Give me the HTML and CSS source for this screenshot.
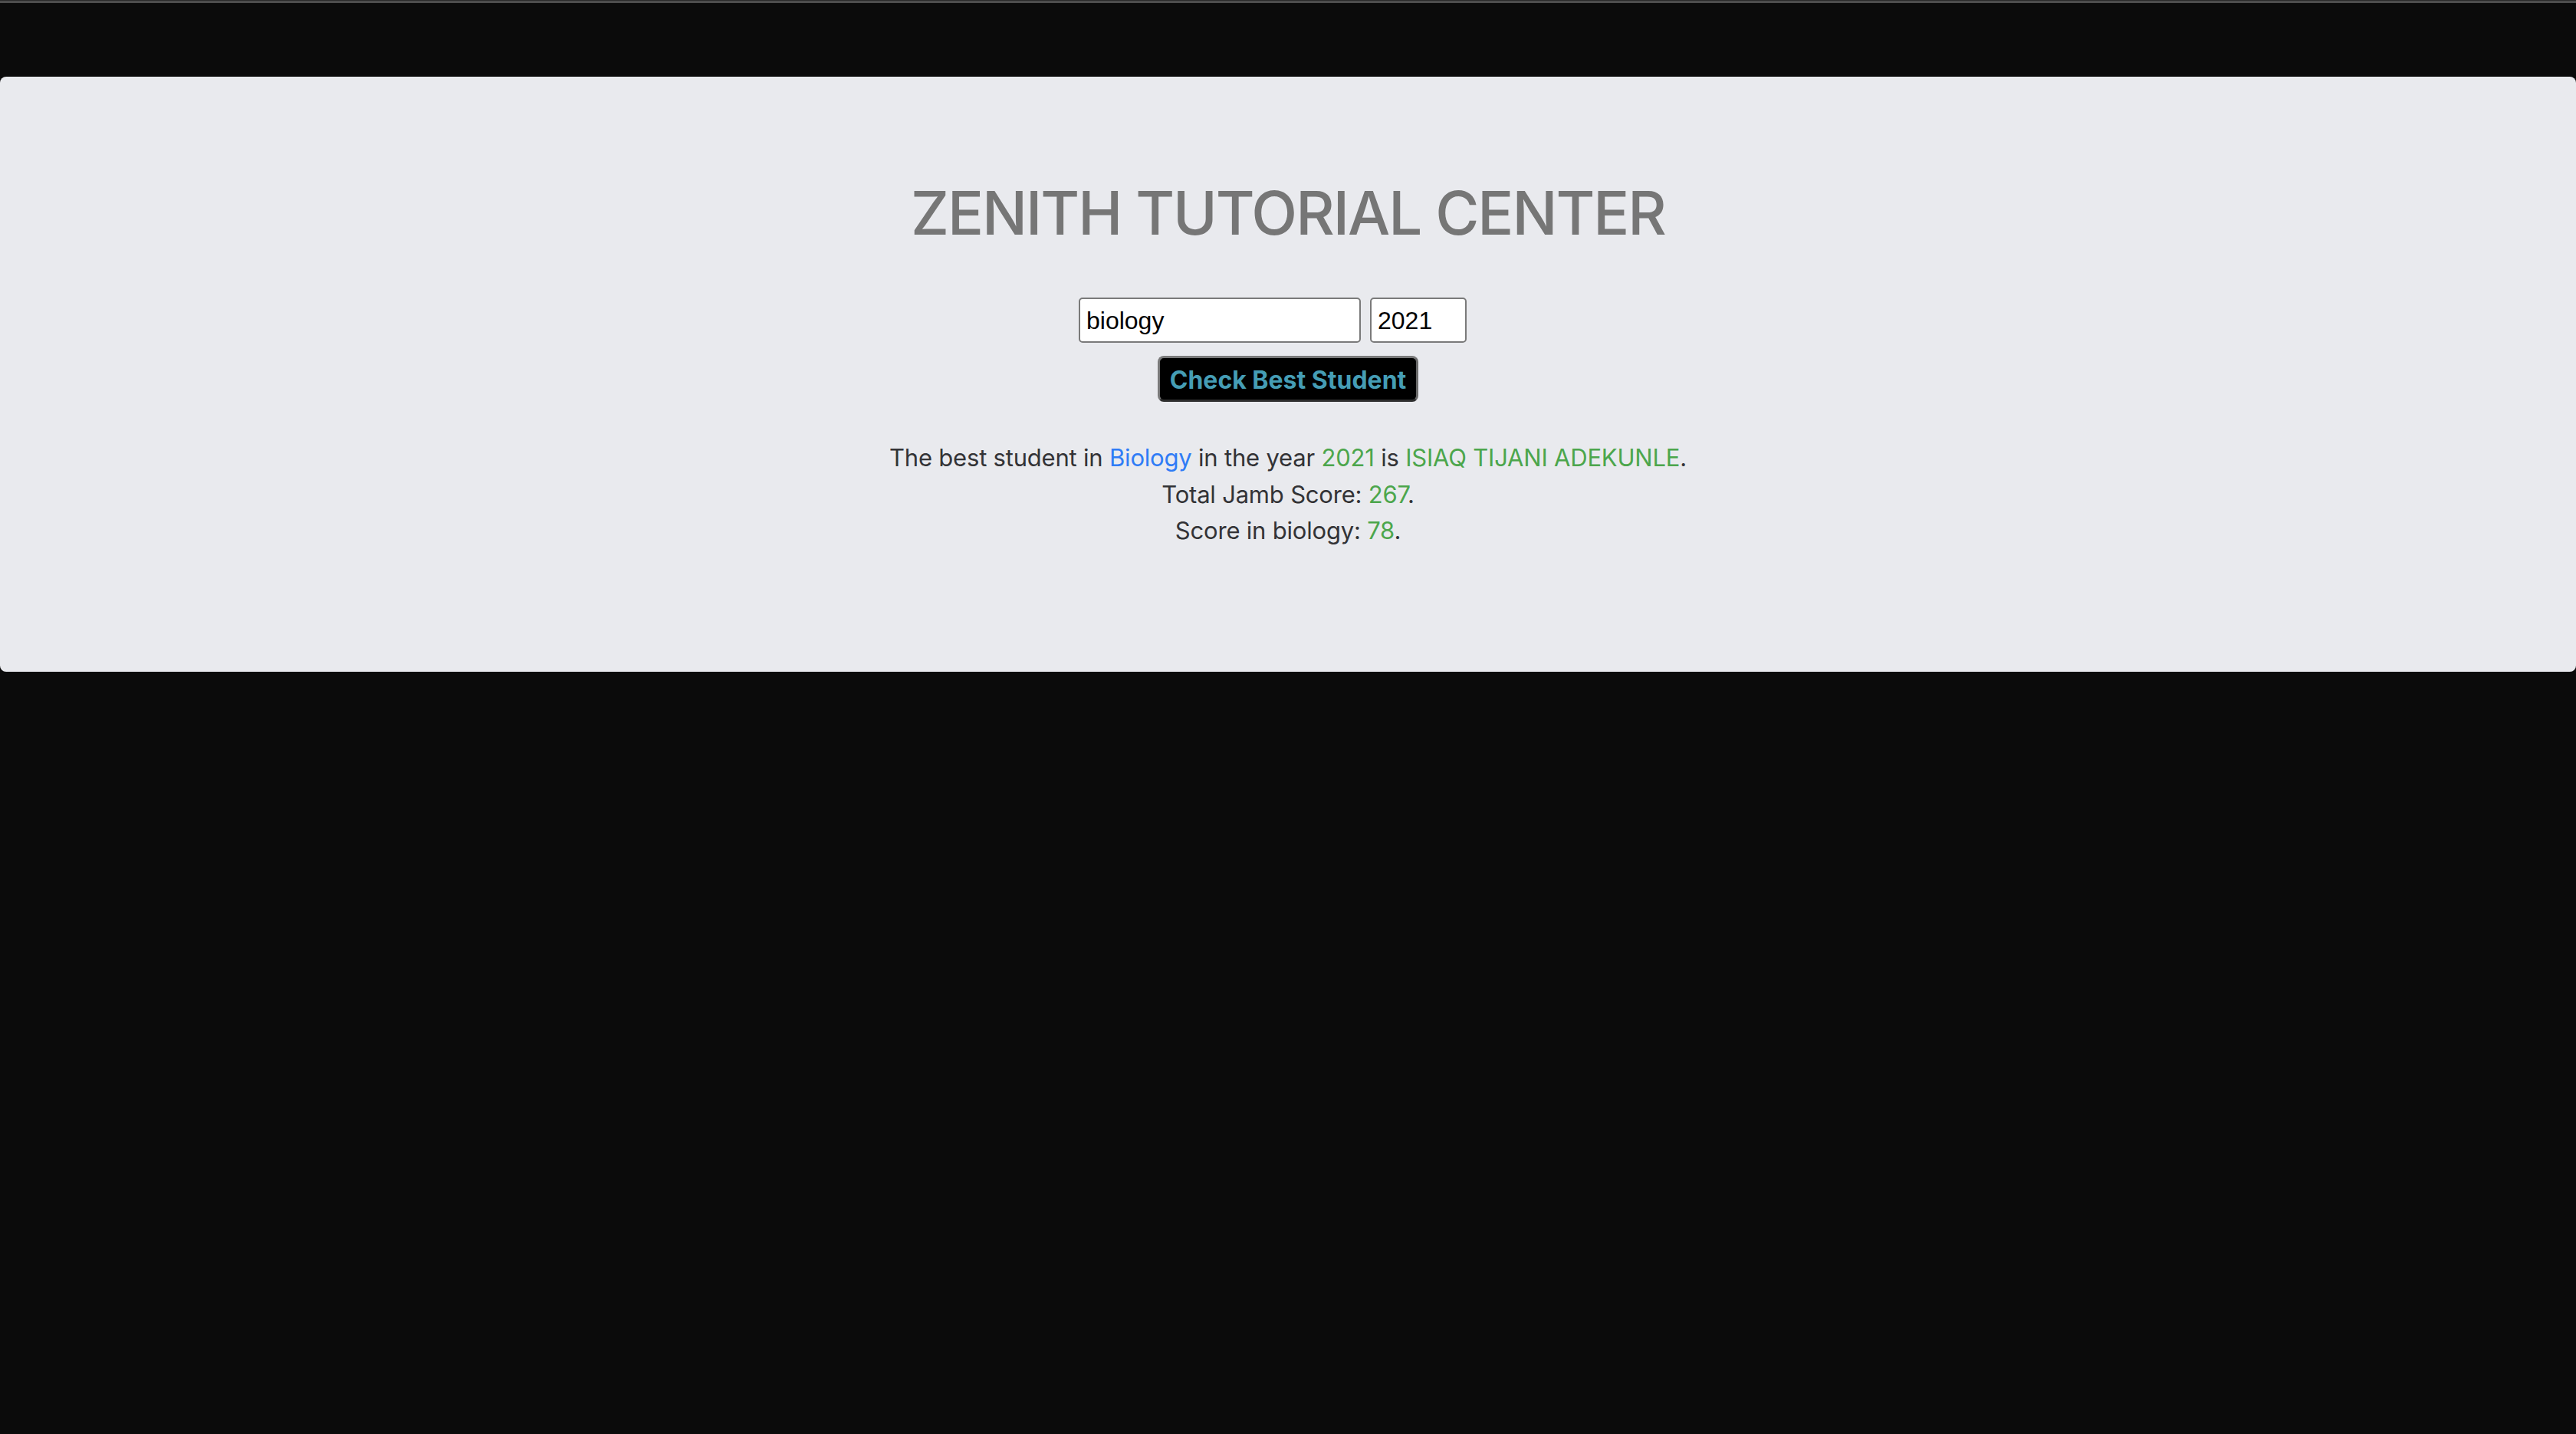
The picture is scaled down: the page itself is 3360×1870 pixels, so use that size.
FILE: index.html
```html
<!DOCTYPE html>
<html lang="en">
<head>
<meta charset="utf-8">
<title>Zenith Tutorial Center</title>
<link rel="stylesheet" href="styles.css">
</head>
<body>
<div class="topline"></div>
<main class="panel">
  <h1 class="title">ZENITH TUTORIAL CENTER</h1>
  <form class="form">
    <div class="inputs">
      <input class="field field-subject" type="text" value="biology">
      <input class="field field-year" type="text" value="2021">
    </div>
    <button class="check-btn" type="button">Check Best Student</button>
  </form>
  <div class="result">
    <p class="line">The best student in <span class="blue">Biology</span> in the year <span class="green">2021</span> is <span class="green">ISIAQ TIJANI ADEKUNLE</span>.</p>
    <p class="line">Total Jamb Score: <span class="green">267</span>.</p>
    <p class="line">Score in biology: <span class="green">78</span>.</p>
  </div>
</main>
</body>
</html>
```

FILE: styles.css
```css
html, body {
  margin: 0;
  padding: 0;
  background: #0b0b0b;
}

body {
  height: 1870px;
  overflow: hidden;
}

.topline {
  height: 3px;
  border-top: 1px solid #2a2a2a;
  background: #4d4d4d;
}

.panel {
  margin-top: 96px;
  height: 776px;
  box-sizing: border-box;
  background: #e9eaee;
  border-radius: 8px;
  padding-top: 139px;
  display: flex;
  flex-direction: column;
  align-items: center;
  font-family: Inter, "Noto Sans", sans-serif;
}

.title {
  margin: 0;
  font-size: 78px;
  line-height: 78px;
  font-weight: 500;
  color: #767676;
  letter-spacing: -2px;
}

.form {
  margin: 71px 0 0;
  display: flex;
  flex-direction: column;
  align-items: center;
}

.inputs {
  display: flex;
  gap: 12px;
  padding-right: 40px;
}

.field {
  box-sizing: border-box;
  height: 59px;
  margin: 0;
  padding: 2px 8px 0;
  border: 2px solid #7a7a7a;
  border-radius: 5px;
  background: #ffffff;
  color: #000000;
  font-family: "Liberation Sans", Arial, sans-serif;
  font-size: 32px;
  outline: none;
}

.field-subject {
  width: 368px;
}

.field-year {
  width: 126px;
}

.check-btn {
  margin-top: 17px;
  box-sizing: border-box;
  width: 340px;
  height: 60px;
  padding: 2px 0 0;
  background: #000000;
  border: 3px solid;
  border-color: #7a7a7a #6a6a6a #2e2e2e #7a7a7a;
  border-radius: 8px;
  color: #459db5;
  font-family: Inter, "Noto Sans", sans-serif;
  font-weight: 700;
  font-size: 32px;
}

.result {
  margin-top: 49px;
  text-align: center;
  color: #333336;
  font-size: 31px;
  line-height: 47.5px;
  letter-spacing: -0.2px;
}

.line {
  margin: 0;
}

.blue {
  color: #2f7cf6;
}

.green {
  color: #4ca64c;
}
```
